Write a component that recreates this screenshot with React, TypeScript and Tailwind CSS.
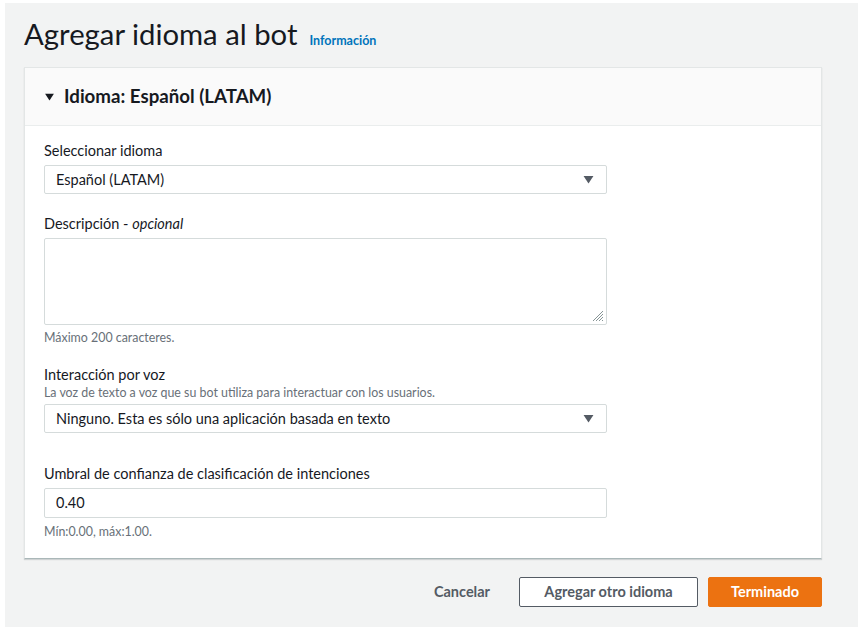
import React from 'react';

const font = { fontFamily: 'Lato, "Noto Sans", sans-serif' };

const Caret = ({ className }: { className?: string }) => (
  <svg viewBox="0 0 12 10" className={className} fill="currentColor">
    <path d="M0.5 1h11L6 9.5z" />
  </svg>
);

const Select = ({ value }: { value: string }) => (
  <div className="flex h-[29px] w-[563px] items-center justify-between rounded-[2px] border border-[#d5dbdb] bg-white pl-[11px] pr-[12px] text-[14.5px] text-[#16191f]">
    <span>{value}</span>
    <Caret className="h-[9px] w-[11px] text-[#545b64]" />
  </div>
);

export default function App() {
  return (
    <div className="h-[630px] w-[865px] bg-white pb-[3px] pl-[5px] pr-[7px] pt-[3px]" style={font}>
      <div className="flex h-full flex-col bg-[#f2f3f3] pl-[19px] pr-[36px]">
        <div className="flex items-baseline gap-[12px] pt-[13px]">
          <h1 className="text-[29.3px] leading-[36px] text-[#16191f]">Agregar idioma al bot</h1>
          <a className="text-[12.5px] font-bold text-[#0073bb]">Información</a>
        </div>

        <div className="mt-[15px] border border-[#e3e6e6] border-b-[#aab7b8] bg-white shadow-[0_1px_1px_rgba(0,28,36,0.15)]">
          <div className="flex h-[58px] items-center gap-[9px] border-b border-[#eaeded] bg-[#fafafa] pl-[19px]">
            <Caret className="h-[8px] w-[11px] text-[#16191f]" />
            <span className="text-[18.7px] font-bold text-[#16191f]">Idioma: Español (LATAM)</span>
          </div>

          <div className="flex flex-col pb-[18px] pl-[19px] pt-[15px] text-[#16191f]">
            <label className="text-[14.5px] leading-[20px]">Seleccionar idioma</label>
            <div className="mt-[4px]">
              <Select value="Español (LATAM)" />
            </div>

            <label className="mt-[20px] text-[14.5px] leading-[20px]">
              Descripción - <i>opcional</i>
            </label>
            <div className="relative mt-[4px] h-[87px] w-[563px] rounded-[2px] border border-[#d5dbdb] bg-white">
              <svg viewBox="0 0 12 12" className="absolute bottom-[2px] right-[2px] h-[12px] w-[12px] text-[#879596]">
                <path d="M11 1L1 11M11 4L4 11M11 7L7 11M11 10L10 11" stroke="currentColor" strokeWidth="1" />
              </svg>
            </div>
            <span className="mt-[5px] text-[12.4px] leading-[16px] text-[#687078]">Máximo 200 caracteres.</span>

            <label className="mt-[19px] text-[14.5px] leading-[20px]">Interacción por voz</label>
            <span className="text-[12.4px] leading-[16px] text-[#687078]">
              La voz de texto a voz que su bot utiliza para interactuar con los usuarios.
            </span>
            <div className="mt-[3px]">
              <Select value="Ninguno. Esta es sólo una aplicación basada en texto" />
            </div>

            <label className="mt-[31px] text-[14.5px] leading-[20px]">Umbral de confianza de clasificación de intenciones</label>
            <div className="mt-[4px] flex h-[30px] w-[563px] items-center rounded-[2px] border border-[#d5dbdb] bg-white pl-[11px] text-[14.5px]">
              0.40
            </div>
            <span className="mt-[6px] text-[12.4px] leading-[16px] text-[#687078]">Mín:0.00, máx:1.00.</span>
          </div>
        </div>

        <div className="mt-[18px] flex items-center justify-end">
          <button className="mr-[29px] text-[14.5px] font-bold text-[#545b64]">Cancelar</button>
          <button className="mr-[10px] h-[30px] w-[179px] rounded-[2px] border border-[#545b64] bg-white text-[14.5px] font-bold text-[#545b64]">
            Agregar otro idioma
          </button>
          <button className="h-[30px] w-[114px] rounded-[2px] border border-[#ec7211] bg-[#ec7211] text-[14.5px] font-bold text-white">
            Terminado
          </button>
        </div>
      </div>
    </div>
  );
}
